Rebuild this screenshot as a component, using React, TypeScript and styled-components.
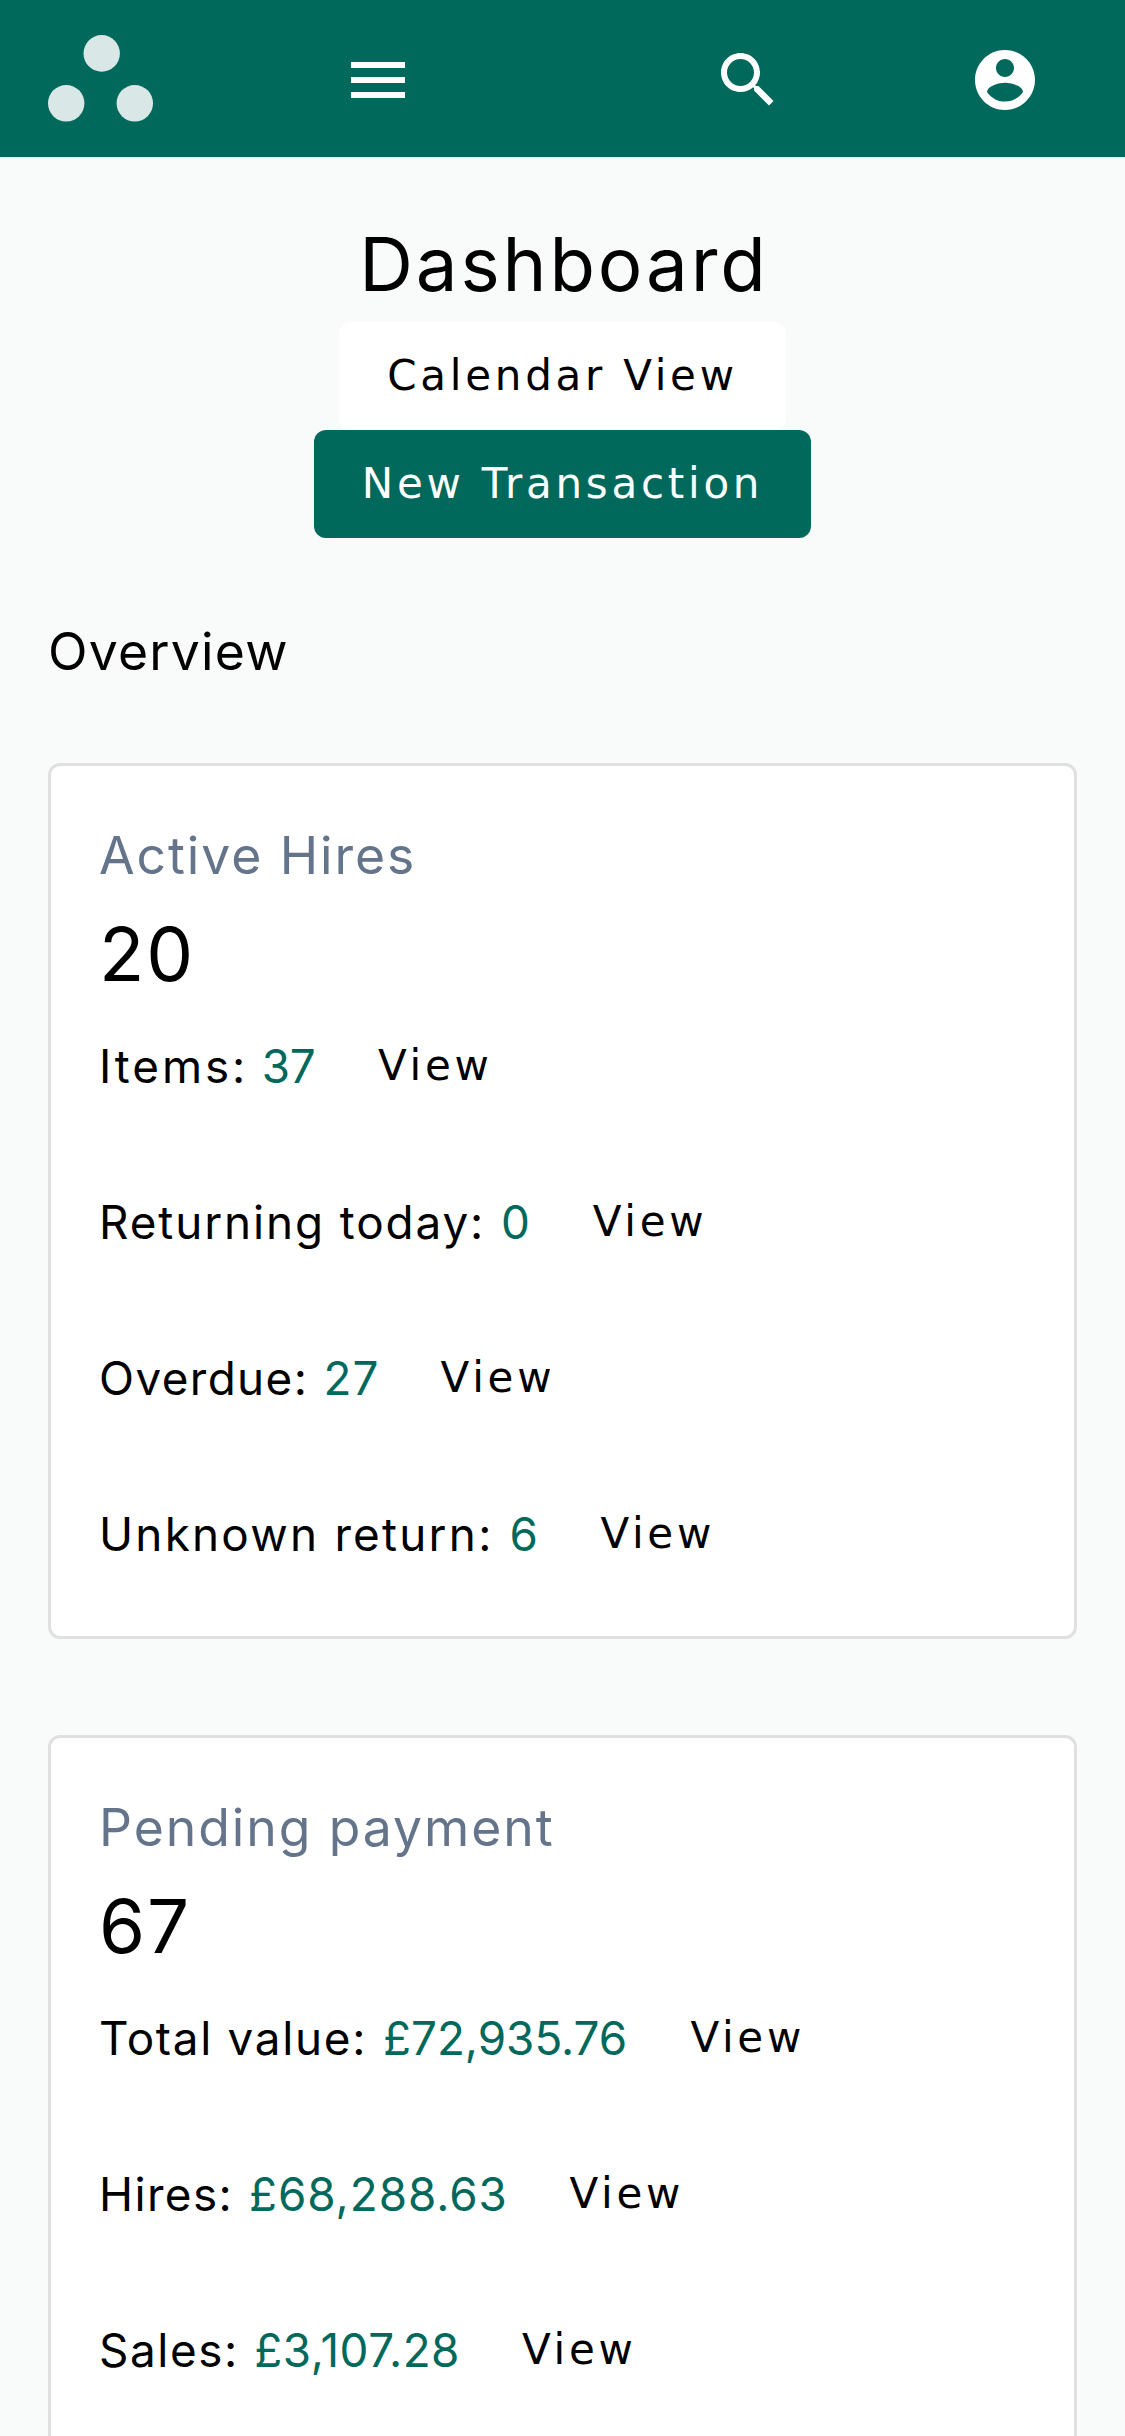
import React from 'react';
import styled, { createGlobalStyle } from 'styled-components';

const GlobalStyle = createGlobalStyle`
  * { box-sizing: border-box; }
  body {
    margin: 0;
    background: #f9fbfa;
    color: #000;
    font-family: Inter, "Liberation Sans", sans-serif;
  }
`;

const Page = styled.div`
  height: 100vh;
  overflow: hidden;
`;

const Header = styled.header`
  display: grid;
  grid-template-columns: 294px 370px 257px auto;
  align-items: center;
  height: 157px;
  padding-left: 48px;
  background: #00695c;
`;

const IconButton = styled.button`
  display: flex;
  justify-self: start;
  padding: 0;
  margin-top: 3px;
  border: 0;
  background: none;
  color: #fff;
`;

const Icon = styled.svg`
  width: 72px;
  height: 72px;
  fill: currentColor;
`;

const Logo = styled.svg`
  width: 106px;
  height: 87px;
  fill: #d9e8e6;
`;

const Main = styled.main`
  padding: 49px 48px 0;
`;

const Intro = styled.section`
  display: flex;
  flex-direction: column;
  align-items: center;
`;

const PageTitle = styled.h1`
  margin: 0;
  padding-left: 3px;
  font-size: 74.4px;
  font-weight: 400;
  line-height: 116px;
  letter-spacing: 2.87px;
`;

const Button = styled.button<{ $primary?: boolean }>`
  height: 108px;
  padding: 0 48px;
  border: 0;
  border-radius: 12px;
  background: ${(p) => (p.$primary ? '#00695c' : '#fff')};
  color: ${(p) => (p.$primary ? '#fff' : '#000')};
  font: 400 42px/108px "DejaVu Sans", sans-serif;
  letter-spacing: 3.75px;
  white-space: nowrap;
`;

const SectionTitle = styled.h2`
  margin: 73px 0 71px;
  font-size: 51.7px;
  font-weight: 400;
  line-height: 81px;
  letter-spacing: 1.2px;
`;

const Cards = styled.div`
  display: flex;
  flex-direction: column;
  gap: 96px;
`;

const Card = styled.article`
  padding: 49px 48px 46px;
  border: 3px solid #e0e0e0;
  border-radius: 12px;
  background: #fff;
`;

const CardTitle = styled.h3`
  margin: 0;
  color: #64748b;
  font-size: 51.7px;
  font-weight: 400;
  line-height: 81px;
  letter-spacing: 1.92px;
`;

const Total = styled.p`
  margin: 0;
  font-size: 74.4px;
  line-height: 117px;
  letter-spacing: 1.9px;
`;

const Stats = styled.div`
  display: grid;
  grid-auto-rows: 108px;
  gap: 48px;
  margin-top: 1px;
`;

const Stat = styled.div`
  display: flex;
  font-size: 45.8px;
  line-height: 106px;
  white-space: nowrap;
`;

const Label = styled.span<{ $width: number; $tracking: number }>`
  flex: none;
  width: ${(p) => p.$width}px;
  letter-spacing: ${(p) => p.$tracking}px;
`;

const Value = styled(Label)`
  color: #00695c;
`;

const ViewButton = styled(Button)`
  padding-bottom: 4px;
  line-height: 104px;
`;

type StatData = {
  label: string;
  labelWidth: number;
  labelTracking: number;
  value: string;
  valueWidth: number;
  valueTracking: number;
};

type CardData = { title: string; total: string; stats: StatData[] };

const stat = (
  label: string,
  labelWidth: number,
  labelTracking: number,
  value: string,
  valueWidth: number,
  valueTracking: number,
): StatData => ({ label, labelWidth, labelTracking, value, valueWidth, valueTracking });

const cards: CardData[] = [
  {
    title: 'Active Hires',
    total: '20',
    stats: [
      stat('Items:', 162.8, 2.9, '37', 68.2, -0.3),
      stat('Returning today:', 402, 1.9, '0', 43.7, 0),
      stat('Overdue:', 224.4, 1.4, '27', 69.2, 1.3),
      stat('Unknown return:', 410.5, 2.25, '6', 42.9, 0),
    ],
  },
  {
    title: 'Pending payment',
    total: '67',
    stats: [
      stat('Total value:', 284, 1.7, '£72,935.76', 259.4, 0),
      stat('Hires:', 150.1, 1.4, '£68,288.63', 272.4, 0.95),
      stat('Sales:', 155.3, 1.6, '£3,107.28', 219.7, 0.55),
    ],
  },
];

export default function App() {
  return (
    <Page>
      <GlobalStyle />
      <Header>
        <Logo viewBox="0 0 106 87" aria-label="Home">
          <ellipse cx="53.7" cy="18.4" rx="18.2" ry="18.3" />
          <ellipse cx="18.2" cy="68.3" rx="18.2" ry="18.3" />
          <ellipse cx="86.8" cy="68.3" rx="18.2" ry="18.3" />
        </Logo>
        <IconButton aria-label="Menu">
          <Icon viewBox="0 0 24 24">
            <path d="M3 18h18v-2H3v2zm0-5h18v-2H3v2zm0-7v2h18V6H3z" />
          </Icon>
        </IconButton>
        <IconButton aria-label="Search">
          <Icon viewBox="0 0 24 24">
            <path d="M15.5 14h-.79l-.28-.27C15.41 12.59 16 11.11 16 9.5 16 5.91 13.09 3 9.5 3S3 5.91 3 9.5 5.91 16 9.5 16c1.61 0 3.09-.59 4.23-1.57l.27.28v.79l5 4.99L20.49 19l-4.99-5zm-6 0C7.01 14 5 11.99 5 9.5S7.01 5 9.5 5 14 7.01 14 9.5 11.99 14 9.5 14z" />
          </Icon>
        </IconButton>
        <IconButton aria-label="Account">
          <Icon viewBox="0 0 24 24">
            <path d="M12 2C6.48 2 2 6.48 2 12s4.48 10 10 10 10-4.48 10-10S17.52 2 12 2zm0 3c1.66 0 3 1.34 3 3s-1.34 3-3 3-3-1.34-3-3 1.34-3 3-3zm0 14.2c-2.5 0-4.71-1.28-6-3.22.03-1.99 4-3.08 6-3.08 1.99 0 5.97 1.09 6 3.08-1.29 1.94-3.5 3.22-6 3.22z" />
          </Icon>
        </IconButton>
      </Header>
      <Main>
        <Intro>
          <PageTitle>Dashboard</PageTitle>
          <Button>Calendar View</Button>
          <Button $primary>New Transaction</Button>
        </Intro>
        <SectionTitle>Overview</SectionTitle>
        <Cards>
          {cards.map((card) => (
            <Card key={card.title}>
              <CardTitle>{card.title}</CardTitle>
              <Total>{card.total}</Total>
              <Stats>
                {card.stats.map((s) => (
                  <Stat key={s.label}>
                    <Label $width={s.labelWidth} $tracking={s.labelTracking}>{s.label}</Label>
                    <Value $width={s.valueWidth} $tracking={s.valueTracking}>{s.value}</Value>
                    <ViewButton>View</ViewButton>
                  </Stat>
                ))}
              </Stats>
            </Card>
          ))}
        </Cards>
      </Main>
    </Page>
  );
}
